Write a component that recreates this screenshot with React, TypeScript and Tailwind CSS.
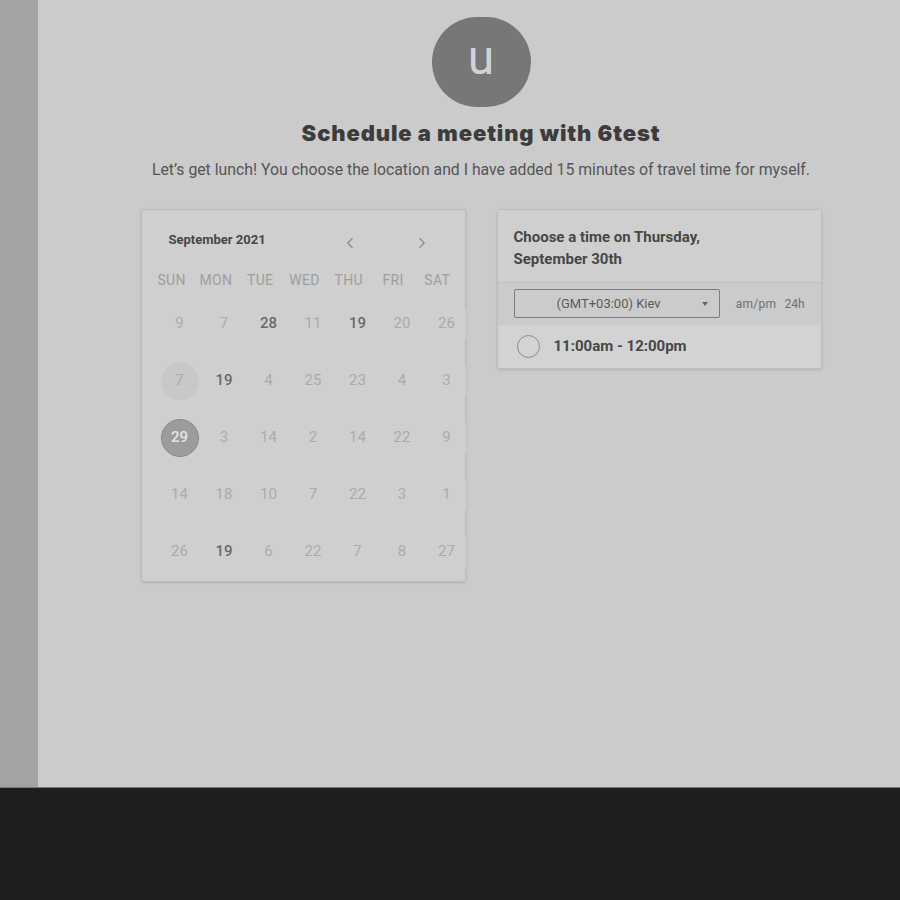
import { ChevronLeft, ChevronRight } from "lucide-react";

const weekdays = ["SUN", "MON", "TUE", "WED", "THU", "FRI", "SAT"];

// [day, bold]
const weeks: [string, boolean][][] = [
  [["9", false], ["7", false], ["28", true], ["11", false], ["19", true], ["20", false], ["26", false]],
  [["7", false], ["19", true], ["4", false], ["25", false], ["23", false], ["4", false], ["3", false]],
  [["29", false], ["3", false], ["14", false], ["2", false], ["14", false], ["22", false], ["9", false]],
  [["14", false], ["18", false], ["10", false], ["7", false], ["22", false], ["3", false], ["1", false]],
  [["26", false], ["19", true], ["6", false], ["22", false], ["7", false], ["8", false], ["27", false]],
];

function Calendar() {
  return (
    <div className="w-[325px] h-[373px] bg-[#cfcfcf] border border-[#bdbdbd] rounded-[3px] shadow-sm relative">
      <div className="flex items-center h-[58px] pl-[27px] pt-[2px]">
        <span className="text-[13px] font-bold text-[#474747] w-[170px]">September 2021</span>
        <ChevronLeft className="h-[18px] w-[18px] text-[#888] mt-[6px] ml-[2px]" strokeWidth={1.5} />
        <ChevronRight className="h-[18px] w-[18px] text-[#888] mt-[6px] ml-[54px]" strokeWidth={1.5} />
      </div>
      <div className="grid grid-cols-7 w-[310px] ml-[8px] text-[14px] text-[#9e9e9e] tracking-wide">
        {weekdays.map((d) => (
          <div key={d} className="text-center h-[24px] leading-[24px]">{d}</div>
        ))}
      </div>
      <div className="mt-[17px] flex flex-col gap-[27px] ml-[19px]">
        {weeks.map((row, i) => (
          <div key={i} className="flex gap-[6.5px]">
            {row.map(([d, bold], j) => {
              const today = i === 1 && j === 0;
              const selected = i === 2 && j === 0;
              return (
                <div
                  key={j}
                  className={`w-[38px] h-[30px] shrink-0 flex items-center justify-center text-[15px] relative ${
                    selected
                      ? "rounded-full bg-[#9c9c9c] text-[#e6e6e6] font-medium h-[38px] -my-[4px] border border-[#888]"
                      : today
                      ? "rounded-full bg-[#c8c8c8] text-[#a9a9a9] h-[38px] -my-[4px]"
                      : bold
                      ? "text-[#6a6a6a] font-medium bg-[#cfcfcf]"
                      : "text-[#ababab] bg-[#cfcfcf]"
                  }`}
                >
                  {d}
                </div>
              );
            })}
          </div>
        ))}
      </div>
    </div>
  );
}

function TimePanel() {
  return (
    <div className="w-[325px] bg-[#cdcdcd] border border-[#bdbdbd] rounded-[3px] shadow-sm overflow-hidden">
      <div className="px-[16px] pt-[16px] pb-[12px] border-b border-[#c2c2c2] bg-[#cfcfcf]">
        <div className="text-[15px] font-bold text-[#474747] leading-[22px]">
          Choose a time on Thursday,
          <br />
          September 30th
        </div>
      </div>
      <div className="flex items-center h-[42px] px-[16px] bg-[#cbcbcb]">
        <div className="w-[207px] h-[29px] border border-[#7d7d7d] rounded-[2px] flex items-center relative">
          <span className="flex-1 text-center text-[13px] text-[#5a5a5a] pr-[16px]">(GMT+03:00) Kiev</span>
          <span className="absolute right-[11px] top-[12px] w-0 h-0 border-l-[3px] border-r-[3px] border-t-[4px] border-l-transparent border-r-transparent border-t-[#666]" />
        </div>
        <span className="ml-[16px] text-[12px] text-[#6e6e6e] tracking-wide">am/pm</span>
        <span className="ml-[8px] text-[12px] text-[#6e6e6e]">24h</span>
      </div>
      <div className="flex items-center h-[43px] px-[19px] bg-[#d3d3d3]">
        <span className="w-[23px] h-[23px] rounded-full border-[1.5px] border-[#8a8a8a]" />
        <span className="ml-[14px] text-[15px] font-bold text-[#474747]">11:00am - 12:00pm</span>
      </div>
    </div>
  );
}

export default function App() {
  return (
    <div className="w-[900px] h-[900px] flex flex-col bg-[#1e1e1e] font-['Roboto','Liberation_Sans',sans-serif]">
      <div className="flex h-[788px] border-b border-[#777]">
        <div className="w-[38px] bg-[#a3a3a3] shrink-0" />
        <div className="flex-1 bg-[#cbcbcb] pl-[24px] flex flex-col items-center">
          <div className="mt-[17px] w-[99px] h-[90px] rounded-full bg-[#777777] flex items-center justify-center">
            <span className="text-[48px] text-[#d2d2d2] leading-none -mt-[8px]">u</span>
          </div>
          <h1 className="mt-[10px] text-[22px] font-black text-[#3c3c3c] font-['Inter','Liberation_Sans',sans-serif] tracking-[0.04em]">
            Schedule a meeting with 6test
          </h1>
          <p className="mt-[8px] text-[15.8px] text-[#555]">
            Let’s get lunch! You choose the location and I have added 15 minutes of travel time for myself.
          </p>
          <div className="mt-[27px] flex items-start gap-[31px]">
            <Calendar />
            <TimePanel />
          </div>
        </div>
      </div>
    </div>
  );
}
